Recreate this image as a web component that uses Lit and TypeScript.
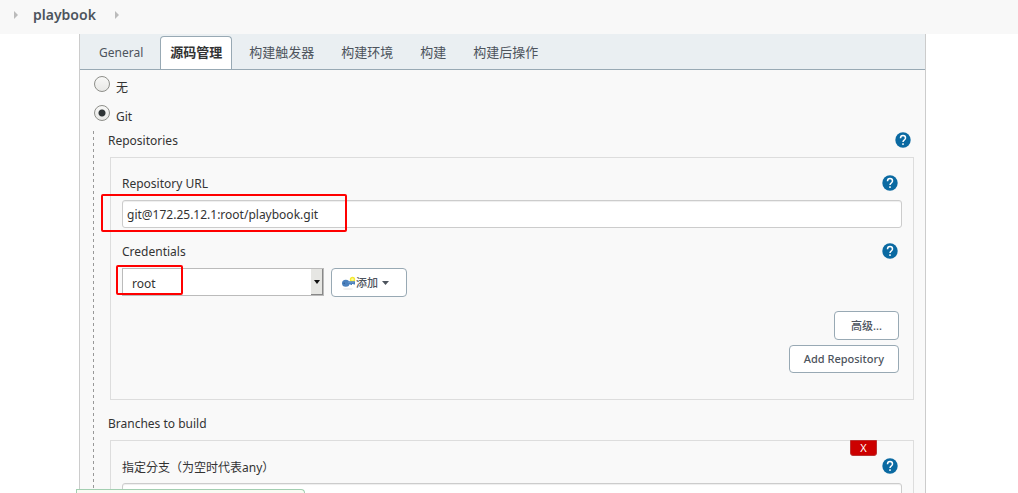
import { LitElement, html, css, svg } from "lit";
import { customElement, property, state } from "lit/decorators.js";

@customElement("help-button")
class HelpButton extends LitElement {
  @property() topic = "";

  static styles = css`
    :host { display: block; height: 16px; }
    button { display: block; width: 16px; height: 16px; padding: 0; border: 0; background: none; cursor: pointer; }
    svg { display: block; }
  `;

  render() {
    return html`<button type="button" aria-label=${"Help: " + this.topic}>
      <svg width="16" height="16" viewBox="0 0 16 16">
        <circle cx="8" cy="8" r="7.7" fill="#0b6aa2" />
        <path d="M5.5 6.3C5.5 4.6 6.5 3.6 8 3.6s2.5 1 2.5 2.3c0 1.1-.7 1.6-1.4 2.2C8.4 8.600 8 9 8 10.100" fill="none" stroke="#fff" stroke-width="1.5" />
        <rect x="7.200" y="11.300" width="1.600" height="1.600" fill="#fff" />
      </svg>
    </button>`;
  }
}

const crumbArrow = svg`<path d="M0 0L4 4L0 8Z" fill="#bbb" />`;

@customElement("app-root")
class AppRoot extends LitElement {
  @state() private tab = 1;
  @state() private scm = "git";

  private tabs = ["General", "源码管理", "构建触发器", "构建环境", "构建", "构建后操作"];

  static styles = css`
    :host {
      display: block;
      position: relative;
      height: 100vh;
      overflow: hidden;
      background: #fff;
      color: #333;
      font: 12px/20px "Noto Sans", "Noto Sans CJK SC", sans-serif;
    }
    * { box-sizing: border-box; }
    button, input, select { font: inherit; color: inherit; margin: 0; }
    .crumbs { display: flex; align-items: center; height: 34px; padding: 0 14px 4px; background: #f8f8f8; }
    .crumbs a { margin: 0 19px 0 15px; color: #4d545d; font-size: 14px; font-weight: 600; text-decoration: none; }
    .panel { margin: 0 92px 0 79px; border: solid #ccc; border-width: 0 1px; background: #f9f9f9; }
    .tabs { display: flex; gap: 7px; height: 36px; padding: 2px 9px 0; background: #eaeff2; border-bottom: 1px solid #98a9b4; }
    .tab { padding: 0 9px; border: 1px solid transparent; border-bottom: 0; border-radius: 4px 4px 0 0; background: none; color: #4d545d; white-space: nowrap; }
    .cjk { padding-bottom: 2px; font-size: 13px; }
    .tab.active { border-color: #98a9b4; background: #fff; color: #333; font-weight: 600; }
    .form { padding: 3px 11px 0 13px; }
    .choice { display: flex; align-items: flex-start; gap: 6px; height: 29px; padding-left: 1px; }
    .choice label { padding-top: 5px; }
    .choice input {
      appearance: none; width: 16px; height: 16px; margin-top: 3px; border: 1px solid #8e8f8a; border-radius: 50%;
      background: linear-gradient(#f8f8f7, #e8e8e6);
    }
    .choice input:checked { background: radial-gradient(circle, #2e3436 3px, transparent 4px), linear-gradient(#f8f8f7, #e8e8e6); }
    .scm { padding-left: 15px; background: repeating-linear-gradient(#999 0 3px, transparent 3px 6px) left / 1px 100% no-repeat; }
    .heading { display: flex; align-items: flex-start; justify-content: space-between; height: 26px; padding-right: 3px; }
    .heading.spaced { height: 40px; padding-top: 14px; }
    .box { position: relative; margin-left: 2px; padding: 16px 11px 26px; border: 1px solid #ddd; }
    .row { display: flex; align-items: flex-start; justify-content: space-between; height: 20px; padding-right: 4px; }
    .row help-button, .heading help-button { margin-top: 1px; }
    .field { position: relative; display: flex; margin: 6px 0 14px; }
    .text { flex: 1; min-width: 0; height: 28px; padding: 0 4px; border: 1px solid #ccc; border-radius: 3px; background: #fff; box-shadow: inset 0 1px 1px #eee; }
    .credentials { gap: 7px; }
    .select { position: relative; display: flex; width: 202px; height: 28px; }
    select { appearance: none; width: 100%; padding: 3px 9px 0; border: 1px solid #bbb; border-width: 1px 2px 1px 1px; border-radius: 0; background: #fff; }
    .drop { position: absolute; top: 1px; right: 1px; bottom: 1px; display: grid; place-items: center; width: 12px; border: 1px solid #888; border-width: 0 1px 1px 0; background: #e6e6e3; pointer-events: none; }
    .button { height: 29px; padding: 0 14px; border: 1px solid #98a9b4; border-radius: 4px; background: #fff; color: #4d545d; font-size: 11px; font-weight: 500; }
    .add { display: flex; align-items: center; width: 76px; padding: 0 9px; }
    .add svg { flex: none; }
    .add .caret { margin-left: 4px; }
    .actions { display: flex; flex-direction: column; align-items: flex-end; gap: 5px; padding-right: 3px; }
    .actions .button { min-width: 65px; }
    .actions .short { height: 28px; }
    .remove { position: absolute; top: -1px; right: 36px; width: 27px; height: 16px; padding: 0; border: 1px solid #b33; border-radius: 0 0 3px 3px; background: #c00; color: #fff; font-size: 11px; line-height: 14px; }
    .wide { font-family: "Noto Sans CJK TC", sans-serif; }
    .mark { position: absolute; border: 2px solid #f00; border-radius: 2px; pointer-events: none; }
    .mark.url { top: -6px; left: -21px; width: 246px; height: 38px; }
    .mark.cred { top: -3px; left: -6px; width: 67px; height: 30px; }
    .status { position: absolute; left: 76px; bottom: 0; width: 229px; height: 4px; border: 1px solid #a3cfb1; border-bottom: 0; border-radius: 0 6px 0 0; background: #f9fbf3; }
  `;

  private radio(value: string, label: string) {
    return html`<div class="choice">
      <input type="radio" name="scm" id=${value} .checked=${this.scm === value} @change=${() => (this.scm = value)} />
      <label for=${value}>${label}</label>
    </div>`;
  }

  render() {
    return html`
      <nav class="crumbs">
        <svg width="4" height="8">${crumbArrow}</svg>
        <a href="#playbook">playbook</a>
        <svg width="4" height="8">${crumbArrow}</svg>
      </nav>
      <main class="panel">
        <div class="tabs" role="tablist">
          ${this.tabs.map((name, i) => html`<button type="button" role="tab"
            class="tab ${i ? "cjk" : ""} ${i === this.tab ? "active" : ""}"
            aria-selected=${i === this.tab} @click=${() => (this.tab = i)}>${name}</button>`)}
        </div>
        <form class="form">
          ${this.radio("none", "无")} ${this.radio("git", "Git")}
          <section class="scm">
            <div class="heading"><span>Repositories</span><help-button topic="Repositories"></help-button></div>
            <div class="box">
              <div class="row"><label for="url">Repository URL</label><help-button topic="Repository URL"></help-button></div>
              <div class="field">
                <input class="text" id="url" type="text" value="git@172.25.12.1:root/playbook.git" />
                <span class="mark url"></span>
              </div>
              <div class="row"><label for="credentials">Credentials</label><help-button topic="Credentials"></help-button></div>
              <div class="field credentials">
                <div class="select">
                  <select id="credentials"><option>root</option></select>
                  <span class="drop"><svg width="6" height="4"><path d="M0 0H6L3 4Z" fill="#111" /></svg></span>
                </div>
                <button type="button" class="button add">
                  <svg width="15" height="14" viewBox="0 0 15 14">
                    <ellipse cx="7" cy="13" rx="5" ry="1" fill="#eee" />
                    <circle cx="11.500" cy="3.500" r="2" fill="#fdfb9a" stroke="#f4e931" stroke-width="1.400" />
                    <path d="M4 5.200H14V8.500H12.500V8H11V9H9.500V8.200H4Z" fill="#4a80bd" />
                    <ellipse cx="4.800" cy="7.300" rx="3.800" ry="3.500" fill="#4a80bd" />
                    <circle cx="3.200" cy="7.300" r=".8" fill="#315f94" />
                    <path d="M7 6.200H13" stroke="#7ba6d4" stroke-width=".7" />
                  </svg>
                  <span>添加</span>
                  <svg class="caret" width="7" height="4"><path d="M0 0H7L3.500 4Z" fill="#4d545d" /></svg>
                </button>
                <span class="mark cred"></span>
              </div>
              <div class="actions">
                <button type="button" class="button">高级...</button>
                <button type="button" class="button short">Add Repository</button>
              </div>
            </div>
            <div class="heading spaced"><span>Branches to build</span></div>
            <div class="box">
              <button type="button" class="remove">X</button>
              <div class="row"><label for="branch" lang="zh-Hant">指定分支<span class="wide">（</span>为空时代表any<span class="wide">）</span></label><help-button topic="Branch"></help-button></div>
              <div class="field"><input class="text" id="branch" type="text" value="*/master" /></div>
            </div>
          </section>
        </form>
      </main>
      <div class="status"></div>
    `;
  }
}
